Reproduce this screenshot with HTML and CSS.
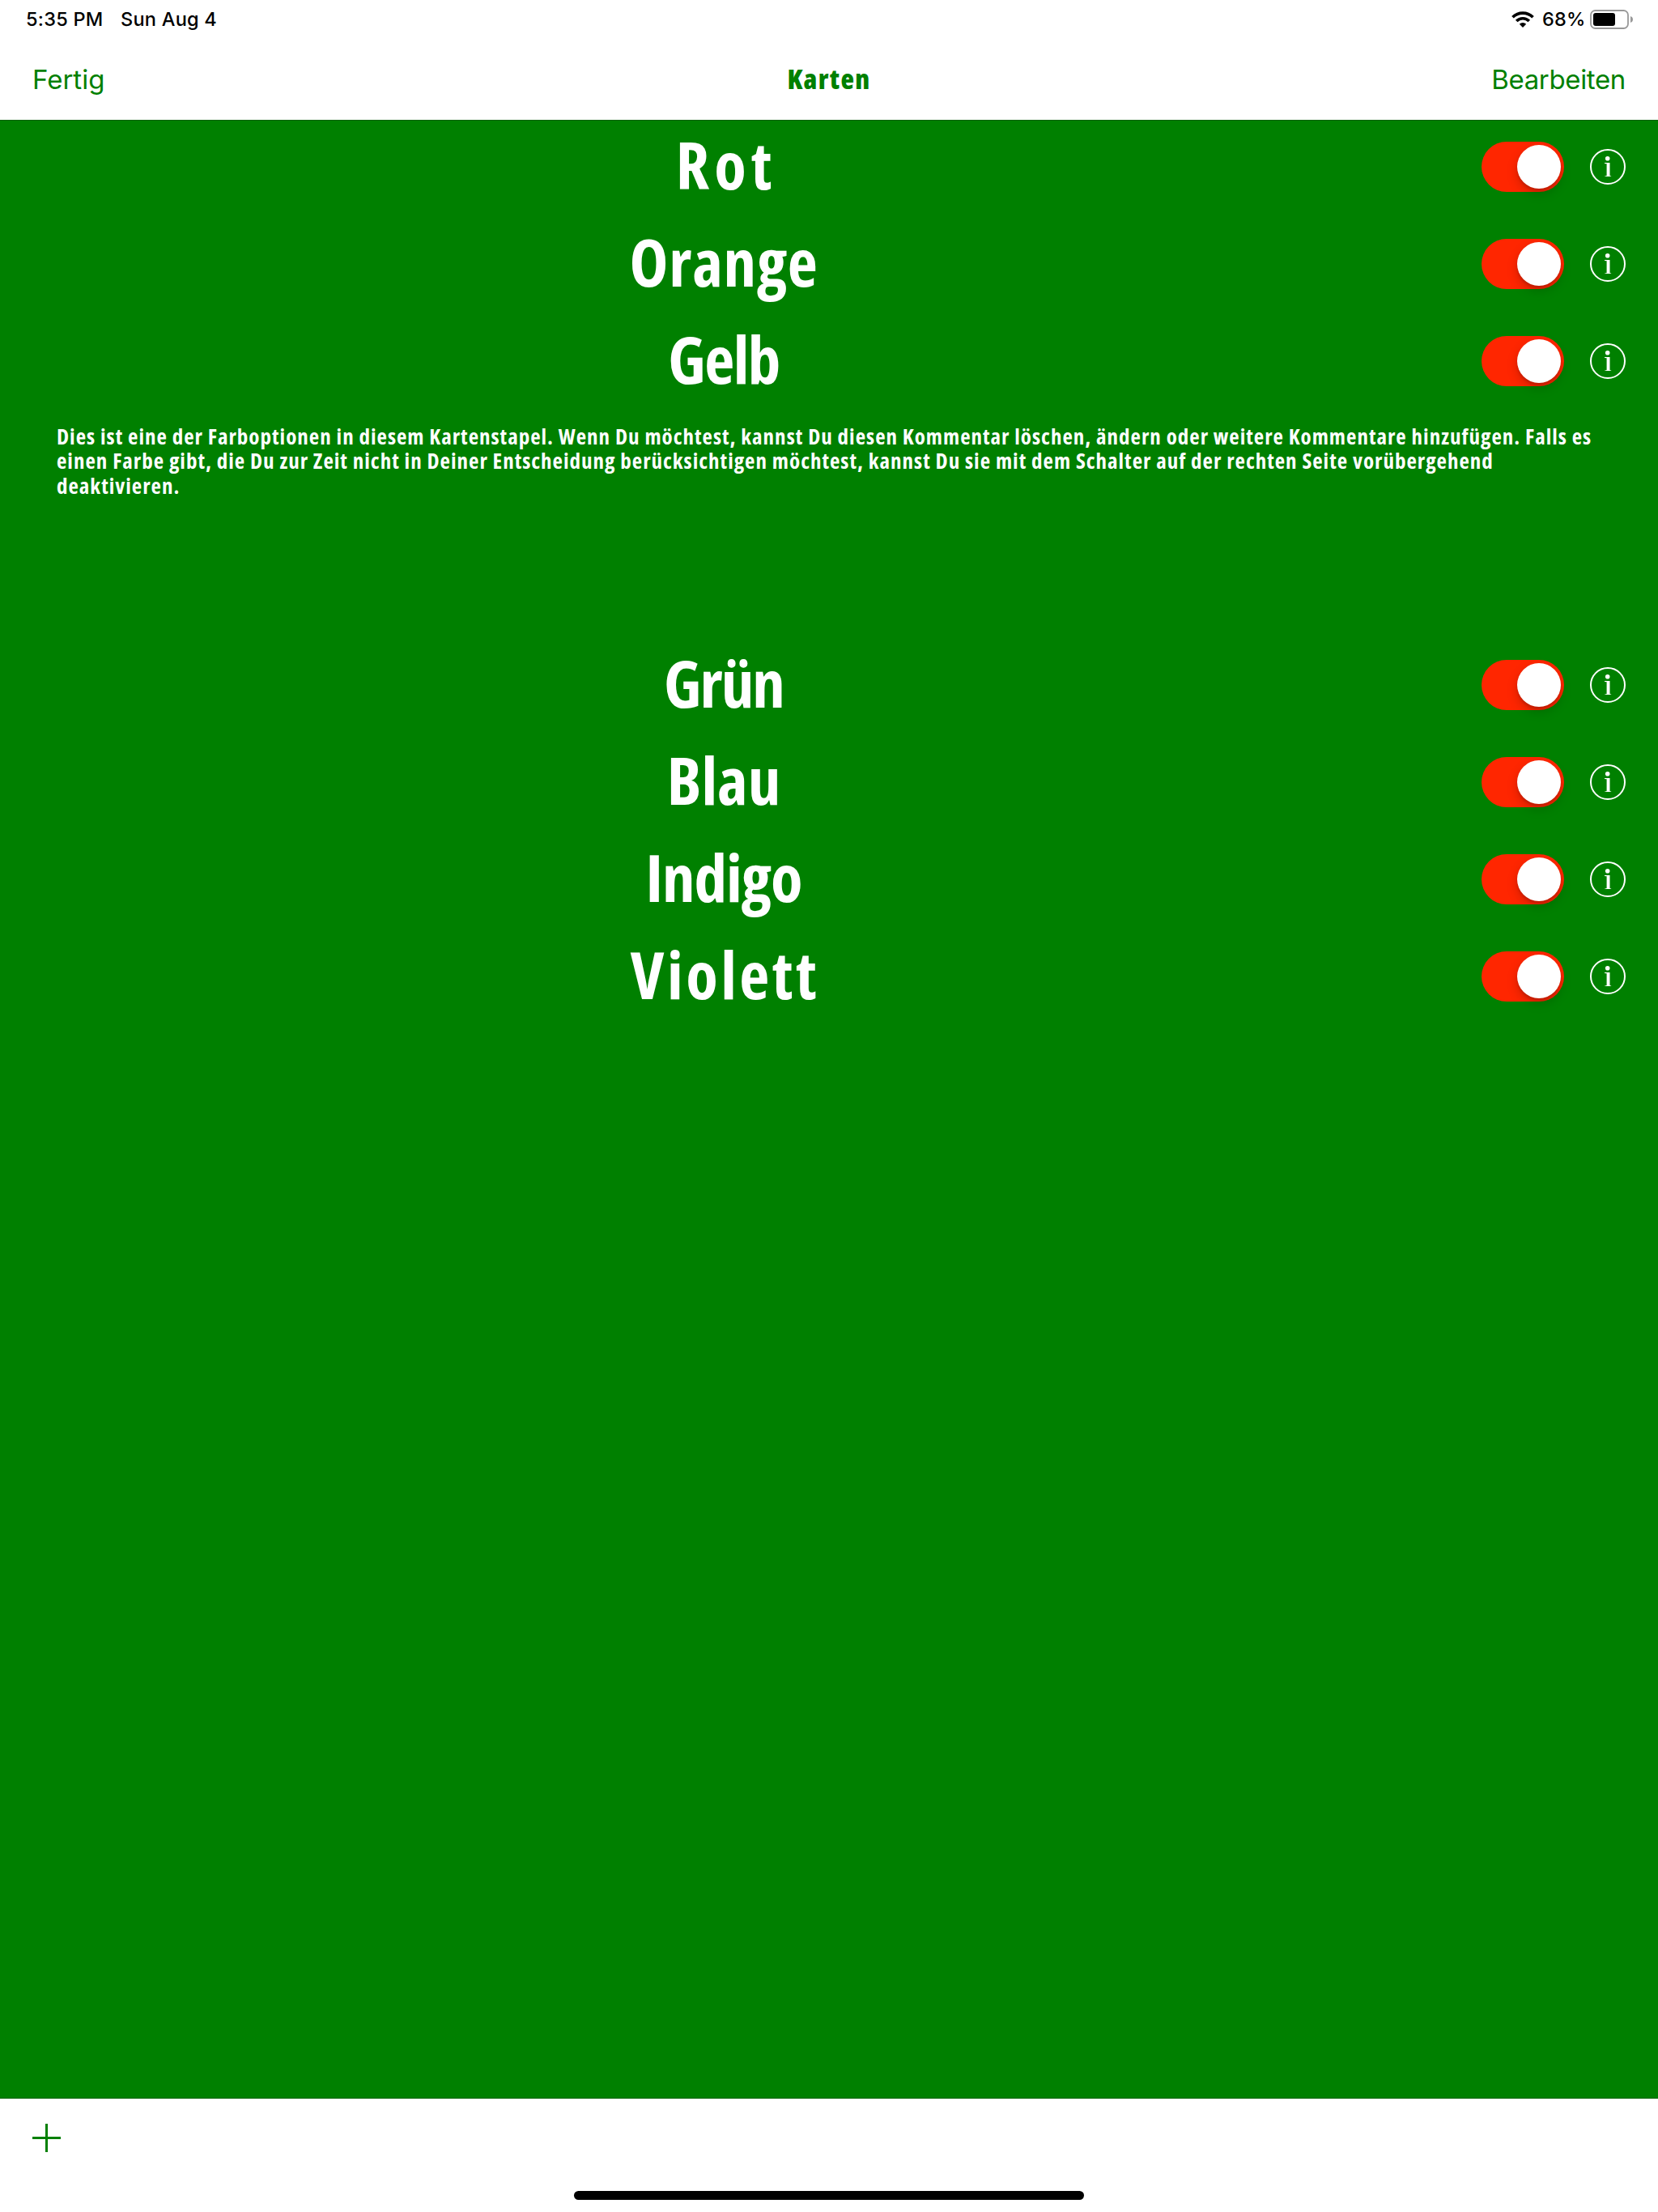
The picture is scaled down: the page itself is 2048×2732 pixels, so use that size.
FILE: index.html
```
<!DOCTYPE html>
<html lang="de">
<head>
<meta charset="utf-8">
<title>Karten</title>
<link rel="stylesheet" href="styles.css">
</head>
<body>
<div class="screen">
  <header class="top">
    <div class="status">
      <span class="time">5:35 PM</span>
      <span class="date">Sun Aug 4</span>
      <span class="spacer"></span>
      <svg class="wifi" width="28" height="20" viewBox="0 0 28 20"><g fill="none" stroke="#000" stroke-width="3.7"><path d="M1.500 7.200a17.700 17.700 0 0 1 25 0"/><path d="M6.200 12a11 11 0 0 1 15.600 0"/></g><path d="M14 20l-4.200-4.300a6 6 0 0 1 8.400 0z"/></svg>
      <span class="percent">68%</span>
      <svg class="battery" width="54" height="24" viewBox="0 0 54 24"><rect x="1" y="1" width="46" height="22" rx="5.500" fill="none" stroke="#999" stroke-width="1.800"/><rect x="4" y="4" width="27" height="16" rx="3" fill="#000"/><path d="M50 8c4 1.200 4 6.800 0 8z" fill="#999"/></svg>
    </div>
    <nav class="nav">
      <span class="action left">Fertig</span>
      <h1 class="title">Karten</h1>
      <span class="action right">Bearbeiten</span>
    </nav>
  </header>
  <main class="list">
    <div class="row"><span class="name rot">Rot</span><span class="switch"></span><span class="info"><svg width="44" height="44" viewBox="0 0 44 44"><use href="#info"/></svg></span></div>
    <div class="row"><span class="name orange">Orange</span><span class="switch"></span><span class="info"><svg width="44" height="44" viewBox="0 0 44 44"><use href="#info"/></svg></span></div>
    <div class="row"><span class="name gelb">Gelb</span><span class="switch"></span><span class="info"><svg width="44" height="44" viewBox="0 0 44 44"><use href="#info"/></svg></span></div>
    <div class="comment">
      <p class="line">Dies ist eine der Farboptionen in diesem Kartenstapel. Wenn Du möchtest, kannst Du diesen Kommentar löschen, ändern oder weitere Kommentare hinzufügen. Falls es</p>
      <p class="line">einen Farbe gibt, die Du zur Zeit nicht in Deiner Entscheidung berücksichtigen möchtest, kannst Du sie mit dem Schalter auf der rechten Seite vorübergehend</p>
      <p class="line">deaktivieren.</p>
    </div>
    <div class="row"><span class="name gruen">Grün</span><span class="switch"></span><span class="info"><svg width="44" height="44" viewBox="0 0 44 44"><use href="#info"/></svg></span></div>
    <div class="row"><span class="name blau">Blau</span><span class="switch"></span><span class="info"><svg width="44" height="44" viewBox="0 0 44 44"><use href="#info"/></svg></span></div>
    <div class="row"><span class="name indigo">Indigo</span><span class="switch"></span><span class="info"><svg width="44" height="44" viewBox="0 0 44 44"><use href="#info"/></svg></span></div>
    <div class="row"><span class="name violett">Violett</span><span class="switch"></span><span class="info"><svg width="44" height="44" viewBox="0 0 44 44"><use href="#info"/></svg></span></div>
  </main>
  <footer class="toolbar">
    <svg class="plus" width="35" height="35" viewBox="0 0 35 35"><path d="M16 0h3v16h16v3H19v16h-3V19H0v-3h16z" fill="#008000"/></svg>
    <div class="home"></div>
  </footer>
</div>
<svg width="0" height="0" class="defs"><defs><g id="info"><circle cx="22" cy="22" r="21" fill="none" stroke="#fff" stroke-width="2"/><circle cx="21.700" cy="11.700" r="2.800" fill="#fff"/><path d="M18 17h6.500v16l1.800.7V34H18v-.3l2.600-.7V18.300L18 18z" fill="#fff"/></g></defs></svg>
</body>
</html>
```
FILE: styles.css
```
* { box-sizing: border-box; }
body { margin: 0; background: #008000; font-family: Inter, sans-serif; }
.defs { position: absolute; }
.screen { display: flex; flex-direction: column; width: 2048px; height: 2732px; overflow: hidden; background: #008000; }
.top { height: 149px; margin-bottom: -3px; background: #fff; border-bottom: 1px solid #006000; flex: none; }
.status { display: flex; align-items: center; height: 47px; padding: 0 30px 0 32px; font-size: 23.5px; font-weight: 500; letter-spacing: .25px; color: #000; white-space: nowrap; }
.time { width: 117px; }
.spacer { flex: 1; }
.wifi { margin-right: 10px; }
.percent { width: 53px; margin-right: 6px; }
.battery { flex: none; }
.nav { display: grid; grid-template-columns: 1fr auto 1fr; align-items: center; height: 102px; padding: 0 40px; color: #008000; }
.action { font-size: 33px; letter-spacing: -.35px; }
.left { letter-spacing: 0; }
.right { text-align: right; }
.title { margin: 0 0 2px; font-family: "Open Sans", sans-serif; font-stretch: 75%; font-size: 34px; font-weight: 800; letter-spacing: 1.4px; }
.list { flex: 1; display: flex; flex-direction: column; color: #fff; font-family: "Marker Felt", "Open Sans", sans-serif; font-stretch: 75%; }
.row { display: flex; align-items: center; height: 120px; padding-right: 39px; flex: none; }
.name { width: 1788px; margin-right: 42px; padding-bottom: 7px; text-align: center; font-size: 81px; font-weight: 700; line-height: 113px; }
.rot { padding-left: 6px; letter-spacing: 6px; }
.orange { letter-spacing: .8px; }
.gelb { letter-spacing: -1.5px; }
.gruen { letter-spacing: -2px; }
.blau { letter-spacing: 0; }
.indigo { letter-spacing: -1px; }
.violett { padding-left: 3px; letter-spacing: 3.5px; }
.switch { width: 102px; height: 62px; margin-right: 32px; border-radius: 31px; background: #ff2600; flex: none; padding: 4px; }
.switch::after { content: ""; display: block; width: 54px; height: 54px; margin-left: 40px; border-radius: 50%; background: #fff; box-shadow: 0 6px 14px rgba(0,0,0,.18), 0 3px 3px rgba(0,0,0,.12); }
.info, .info svg { display: block; width: 44px; height: 44px; flex: none; }
.comment { height: 280px; padding: 18px 70px 0; font-size: 27px; font-weight: 700; letter-spacing: 1px; line-height: 30.400px; white-space: nowrap; flex: none; }
.line { margin: 0; }
.toolbar { display: flex; flex-direction: column; height: 141px; background: #fff; border-top: 1px solid #006000; flex: none; }
.plus { margin: 31px 0 0 40px; }
.home { width: 630px; height: 11px; margin: 48px auto 0; border-radius: 6px; background: #000; }
```
